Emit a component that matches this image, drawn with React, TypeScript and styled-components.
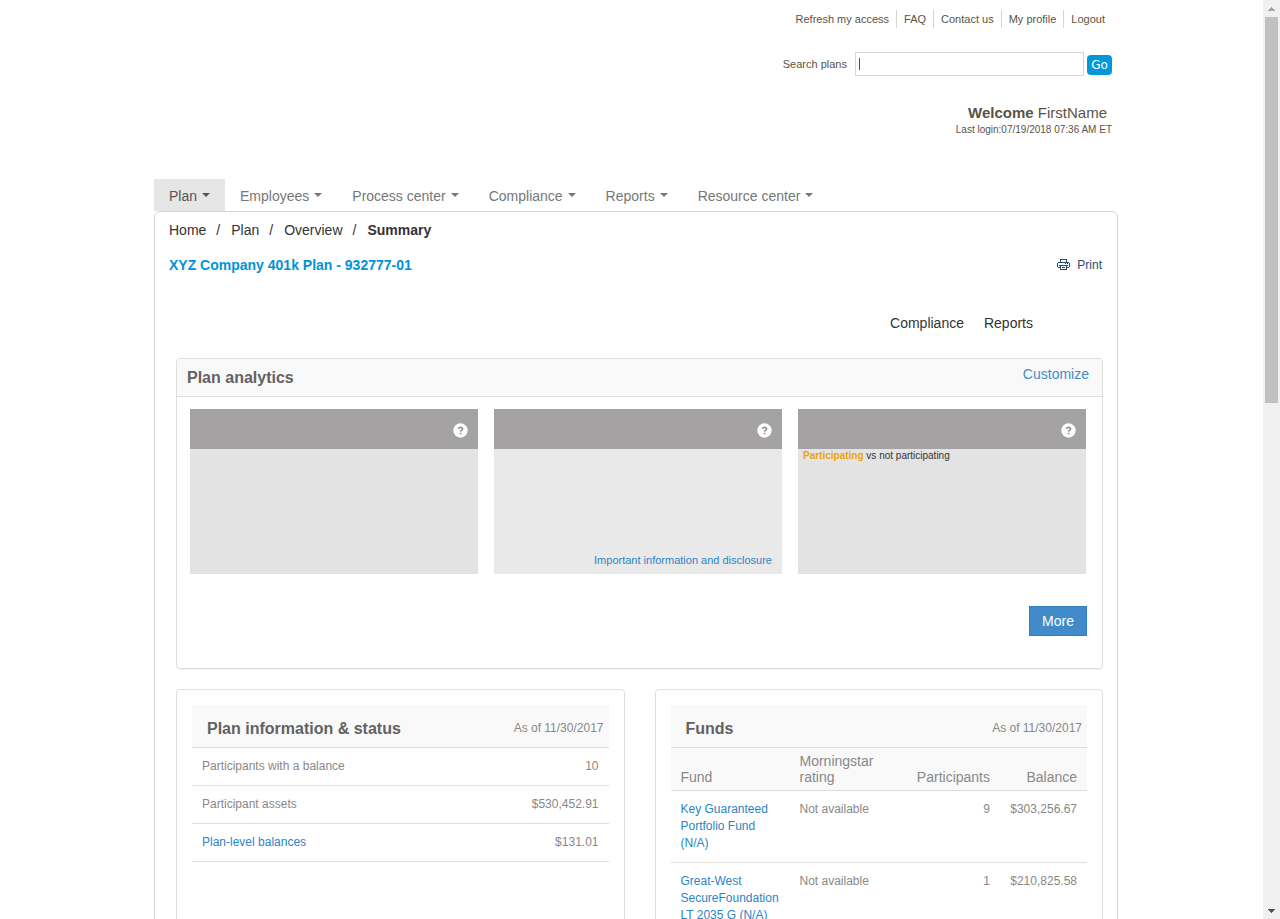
import React from "react";
import styled, { createGlobalStyle } from "styled-components";

const GlobalStyle = createGlobalStyle`
  * { box-sizing: border-box; }
  body {
    margin: 0;
    background: #fff;
    color: #333;
    font-family: "Liberation Sans", Arial, sans-serif;
    font-size: 14px;
    line-height: 20px;
  }
  a { text-decoration: none; color: inherit; }
  ul, ol { list-style: none; margin: 0; padding: 0; }
  h1, h2, p { margin: 0; }
`;

const Shell = styled.div`
  display: flex;
  height: 100vh;
`;

const Scroller = styled.div`
  flex: 1;
  min-width: 0;
  padding-left: 9px;
  overflow-y: auto;
  scrollbar-width: none;
`;

const Page = styled.div`
  max-width: 964px;
  margin: 0 auto;
`;

/* Scroll bar */
const ScrollTrack = styled.div`
  display: flex;
  flex-direction: column;
  width: 17px;
  background: #f0f0f0;
`;

const ScrollButton = styled.button`
  display: flex;
  align-items: center;
  justify-content: center;
  height: 17px;
  padding: 0;
  border: 0;
  background: transparent;
`;

const ScrollLane = styled.div`
  flex: 1;
  padding: 0 2px;
`;

const ScrollThumb = styled.div`
  height: 43.6%;
  background: #c0c0c0;
`;

/* Header */
const Header = styled.header`
  display: flex;
  flex-direction: column;
  align-items: flex-end;
  padding: 10px 6px 0 0;
  color: #5b5346;
  font-size: 11px;
`;

const UtilityLinks = styled.ul`
  display: flex;
  line-height: 18px;
  li { padding: 0 7px; }
  li + li { border-left: 1px solid #d6d6cc; }
`;

const SearchForm = styled.form`
  display: flex;
  align-items: center;
  margin-top: 24px;
`;

const SearchInput = styled.input`
  width: 229px;
  height: 24px;
  margin: 0 3px 0 8px;
  padding: 0 4px;
  border: 1px solid #d6d6cc;
  background: linear-gradient(#5b5346, #5b5346) 3px 5px / 1px 12px no-repeat #fff;
  font: inherit;
  outline: none;
`;

const GoButton = styled.button`
  width: 25px;
  height: 20px;
  margin-top: 2px;
  padding: 0;
  border: 0;
  border-radius: 4px;
  background: #0098db;
  color: #fff;
  font: 12px/20px "DejaVu Sans", Verdana, sans-serif;
`;

const Welcome = styled.p`
  margin: 27px 5px 0 0;
  font-size: 15px;
  line-height: 20px;
`;

const LastLogin = styled.p`
  font-size: 10px;
  line-height: 14px;
`;

/* Main navigation */
const Nav = styled.nav`
  display: flex;
  margin-top: 42px;
`;

const NavTab = styled.a<{ $active?: boolean }>`
  display: flex;
  align-items: center;
  height: 32px;
  padding: 1px 15px 0;
  background: ${(p) => (p.$active ? "#e6e6e6" : "transparent")};
  color: ${(p) => (p.$active ? "#555" : "#777")};
`;

const Caret = styled.span`
  margin: -2px 0 0 5px;
  border: 4px solid transparent;
  border-top-color: currentColor;
  border-bottom: 0;
`;

const Content = styled.main`
  border: 1px solid #d6d6cc;
  border-radius: 6px 6px 0 0;
  padding: 8px 14px 20px;
`;

const Breadcrumb = styled.ol`
  display: flex;
  color: #333;
  li + li::before { content: "/"; margin: 0 11px 0 10px; }
  li:last-child { font-weight: bold; }
  li:last-child::before { font-weight: normal; }
`;

const TitleRow = styled.div`
  display: flex;
  align-items: center;
  justify-content: space-between;
  margin-top: 15px;
  padding-right: 1px;
`;

const PlanTitle = styled.h1`
  color: #0093d9;
  font-size: 14px;
  line-height: 20px;
`;

const PrintLink = styled.a`
  display: flex;
  align-items: center;
  gap: 7px;
  color: #1f4e6e;
  font-size: 12px;
`;

const QuickLinks = styled.div`
  display: flex;
  justify-content: flex-end;
  gap: 20px;
  margin: 38px 70px 25px 0;
`;

const Panel = styled.section`
  border: 1px solid #ddd;
  border-radius: 4px;
  box-shadow: 0 1px 1px rgba(0, 0, 0, 0.05);
  overflow: hidden;
`;

const PanelStack = styled.div`
  display: flex;
  flex-direction: column;
  gap: 20px;
  margin-left: 7px;
`;

const PanelHeader = styled.div`
  display: flex;
  justify-content: space-between;
  height: 38px;
  padding: 5px 13px 0 10px;
  border-bottom: 1px solid #ddd;
  background: #f9f9f9;
`;

const PanelTitle = styled.h2`
  padding-top: 2px;
  color: #636163;
  font-size: 16px;
  line-height: 24px;
`;

const BlueLink = styled.a`
  color: #428bca;
`;

const Tiles = styled.div`
  display: grid;
  grid-template-columns: repeat(3, 1fr);
  gap: 16px;
  padding: 12px 16px 32px 13px;
`;

const Tile = styled.article<{ $light?: boolean }>`
  display: flex;
  flex-direction: column;
  min-height: 165px;
  background: ${(p) => (p.$light ? "#e9e9e9" : "#e3e3e3")};
`;

const TileHeader = styled.div`
  display: flex;
  align-items: center;
  justify-content: flex-end;
  height: 40px;
  padding: 3px 10px 0;
  background: #a4a2a3;
`;

const HelpButton = styled.button`
  display: flex;
  padding: 0;
  border: 0;
  background: transparent;
`;

const Disclosure = styled.a`
  margin: auto 10px 4px auto;
  color: #2a85c4;
  font-size: 11px;
`;

const TileNote = styled.p`
  padding: 0 5px;
  font-size: 10px;
  line-height: 14px;
  strong { color: #eba30c; }
`;

const MoreRow = styled.div`
  display: flex;
  justify-content: flex-end;
  padding: 0 15px 32px;
`;

const MoreButton = styled.button`
  height: 30px;
  padding: 0 12px;
  border: 1px solid #357ebd;
  background: #428bca;
  color: #fff;
  font: 14px/20px "Liberation Sans", Arial, sans-serif;
`;

const Columns = styled.div`
  display: grid;
  grid-template-columns: 1fr 1fr;
  gap: 30px;
`;

const Card = styled(Panel)`
  padding: 15px;
`;

const CardHeader = styled.div`
  display: flex;
  align-items: center;
  justify-content: space-between;
  height: 43px;
  padding: 4px 5px 0 15px;
  border-bottom: 1px solid #ddd;
  background: #f9f9f9;
`;

const AsOf = styled.span`
  color: #888;
  font-size: 12px;
`;

const Table = styled.table`
  width: 100%;
  border-collapse: separate;
  border-spacing: 0;
  table-layout: fixed;
  color: #888;
  font-size: 12px;
  line-height: 17px;
  a { color: #2a85c4; }
  th, td { border-bottom: 1px solid #ddd; text-align: left; font-weight: normal; }
  td, tbody th { padding: 10px; vertical-align: top; }
  thead th {
    padding: 5px 10px;
    background: #f9f9f9;
    font-size: 14px;
    line-height: 16px;
    vertical-align: bottom;
  }
`;

const NumCell = styled.td`
  && { text-align: right; }
`;

const NumHead = styled.th`
  && { text-align: right; }
`;

const FundCol = styled.col<{ $w: string }>`
  width: ${(p) => p.$w};
`;

const utility = ["Refresh my access", "FAQ", "Contact us", "My profile", "Logout"];
const tabs = ["Plan", "Employees", "Process center", "Compliance", "Reports", "Resource center"];
const funds = [
  { name: "Key Guaranteed Portfolio Fund (N/A)", rating: "Not available", count: 9, balance: "$303,256.67" },
  { name: "Great-West SecureFoundation LT 2035 G (N/A)", rating: "Not available", count: 1, balance: "$210,825.58" },
];

const Help = () => (
  <HelpButton type="button" aria-label="Help">
    <svg width="15" height="15" viewBox="0 0 15 15">
      <circle cx="7.5" cy="7.5" r="7.2" fill="#fff" />
      <path d="M5.5 5.9C5.6 4.8 6.4 4.4 7.5 4.4s2 .5 2 1.5c0 1.3-1.9 1.3-1.9 2.8" fill="none" stroke="#9a9899" strokeWidth="1.7" />
      <rect x="6.7" y="9.7" width="1.8" height="1.7" fill="#9a9899" />
    </svg>
  </HelpButton>
);

const Printer = () => (
  <svg width="13" height="12" viewBox="0 0 13 12" fill="#1f4e79" shapeRendering="crispEdges" aria-hidden="true">
    <path d="M3 0h7v1H3zM3 1h1v2H3zM9 1h1v2H9zM1 3h11v1H1zM0 4h1v4H0zM12 4h1v4h-1zM8 4h1v1H8zM10 4h1v1h-1zM2 6h9v1H2zM1 8h2v1H1zM10 8h2v1h-2zM3 7h1v4H3zM9 7h1v4H9zM5 8h3v1H5zM3 10h7v1H3z" />
  </svg>
);

export default function App() {
  return (
    <>
      <GlobalStyle />
      <Shell>
        <Scroller>
          <Page>
            <Header>
              <UtilityLinks>
                {utility.map((u) => (
                  <li key={u}><a href="#">{u}</a></li>
                ))}
              </UtilityLinks>
              <SearchForm>
                <label htmlFor="search">Search plans</label>
                <SearchInput id="search" type="text" />
                <GoButton type="button">Go</GoButton>
              </SearchForm>
              <Welcome><strong>Welcome</strong> FirstName</Welcome>
              <LastLogin>Last login:07/19/2018 07:36 AM ET</LastLogin>
            </Header>
            <Nav>
              {tabs.map((t, i) => (
                <NavTab key={t} href="#" $active={i === 0}>{t}<Caret /></NavTab>
              ))}
            </Nav>
            <Content>
              <Breadcrumb>
                <li><a href="#">Home</a></li>
                <li><a href="#">Plan</a></li>
                <li><a href="#">Overview</a></li>
                <li>Summary</li>
              </Breadcrumb>
              <TitleRow>
                <PlanTitle>XYZ Company 401k Plan - 932777-01</PlanTitle>
                <PrintLink href="#"><Printer />Print</PrintLink>
              </TitleRow>
              <QuickLinks>
                <a href="#">Compliance</a>
                <a href="#">Reports</a>
              </QuickLinks>
              <PanelStack>
                <Panel>
                  <PanelHeader>
                    <PanelTitle>Plan analytics</PanelTitle>
                    <BlueLink href="#">Customize</BlueLink>
                  </PanelHeader>
                  <Tiles>
                    <Tile><TileHeader><Help /></TileHeader></Tile>
                    <Tile $light>
                      <TileHeader><Help /></TileHeader>
                      <Disclosure href="#">Important information and disclosure</Disclosure>
                    </Tile>
                    <Tile>
                      <TileHeader><Help /></TileHeader>
                      <TileNote><strong>Participating</strong> vs not participating</TileNote>
                    </Tile>
                  </Tiles>
                  <MoreRow><MoreButton type="button">More</MoreButton></MoreRow>
                </Panel>
                <Columns>
                  <Card>
                    <CardHeader>
                      <PanelTitle>Plan information &amp; status</PanelTitle>
                      <AsOf>As of 11/30/2017</AsOf>
                    </CardHeader>
                    <Table>
                      <tbody>
                        <tr><th scope="row">Participants with a balance</th><NumCell>10</NumCell></tr>
                        <tr><th scope="row">Participant assets</th><NumCell>$530,452.91</NumCell></tr>
                        <tr><th scope="row"><a href="#">Plan-level balances</a></th><NumCell>$131.01</NumCell></tr>
                      </tbody>
                    </Table>
                  </Card>
                  <Card>
                    <CardHeader>
                      <PanelTitle>Funds</PanelTitle>
                      <AsOf>As of 11/30/2017</AsOf>
                    </CardHeader>
                    <Table>
                      <colgroup>
                        <FundCol $w="119px" />
                        <FundCol $w="auto" />
                        <FundCol $w="100px" />
                        <FundCol $w="87px" />
                      </colgroup>
                      <thead>
                        <tr>
                          <th scope="col">Fund</th>
                          <th scope="col">Morningstar rating</th>
                          <NumHead scope="col">Participants</NumHead>
                          <NumHead scope="col">Balance</NumHead>
                        </tr>
                      </thead>
                      <tbody>
                        {funds.map((f) => (
                          <tr key={f.name}>
                            <td><a href="#">{f.name}</a></td>
                            <td>{f.rating}</td>
                            <NumCell>{f.count}</NumCell>
                            <NumCell>{f.balance}</NumCell>
                          </tr>
                        ))}
                      </tbody>
                    </Table>
                  </Card>
                </Columns>
              </PanelStack>
            </Content>
          </Page>
        </Scroller>
        <ScrollTrack>
          <ScrollButton type="button" aria-label="Scroll up">
            <svg width="7" height="4" viewBox="0 0 7 4" shapeRendering="crispEdges"><path d="M3 0h1v1h1v1h1v1h1v1H0V3h1V2h1V1h1z" fill="#a3a3a3" /></svg>
          </ScrollButton>
          <ScrollLane><ScrollThumb /></ScrollLane>
          <ScrollButton type="button" aria-label="Scroll down">
            <svg width="7" height="4" viewBox="0 0 7 4" shapeRendering="crispEdges"><path d="M0 0h7v1H6v1H5v1H4v1H3V3H2V2H1V1H0z" fill="#505050" /></svg>
          </ScrollButton>
        </ScrollTrack>
      </Shell>
    </>
  );
}
